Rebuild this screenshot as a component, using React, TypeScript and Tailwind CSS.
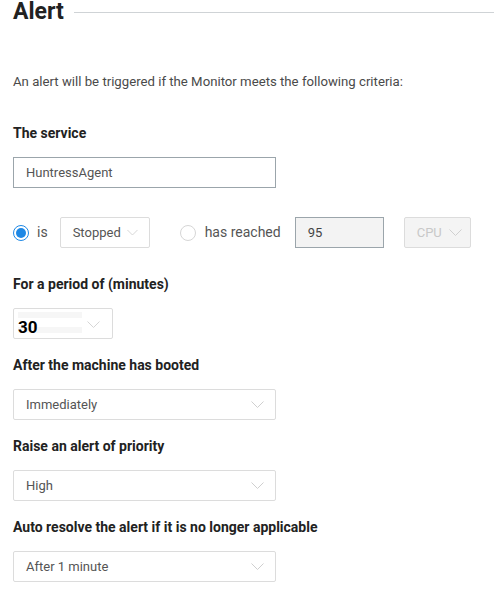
import React from 'react';

const font = { fontFamily: 'Roboto, "Liberation Sans", sans-serif' };

function Chevron({ color = '#cfcfcf' }: { color?: string }) {
  return (
    <svg width="13" height="7" viewBox="0 0 13 7" fill="none">
      <path d="M0.5 0.5 L6.5 6.5 L12.5 0.5" stroke={color} strokeWidth="1" />
    </svg>
  );
}

function Select({ value, className = '' }: { value: string; className?: string }) {
  return (
    <div
      className={`flex h-[31px] items-center justify-between rounded-[2px] border border-[#dcdcdc] bg-white pl-[12px] pr-[11px] text-[13px] text-[#555] ${className}`}
    >
      <span>{value}</span>
      <Chevron />
    </div>
  );
}

function Label({ children }: { children: React.ReactNode }) {
  return <div className="mb-[15px] h-[18px] text-[14px] font-bold leading-[18px] text-[#222]">{children}</div>;
}

export default function App() {
  return (
    <div className="h-[591px] w-[494px] overflow-hidden bg-white pl-[13px]" style={font}>
      <div className="flex h-[24px] items-center">
        <h1 className="text-[23px] font-bold leading-[24px] text-[#222]">Alert</h1>
        <div className="ml-[10px] h-px flex-1 bg-[#cfd3d6]" />
      </div>

      <p className="mt-[49px] h-[18px] text-[13.2px] leading-[18px] text-[#4a4a4a]">
        An alert will be triggered if the Monitor meets the following criteria:
      </p>

      <div className="mt-[33px]">
        <Label>The service</Label>
        <div className="flex h-[31px] w-[263px] items-center border border-[#9ba5ab] px-[12px] text-[13px] text-[#555]">
          HuntressAgent
        </div>
      </div>

      <div className="mt-[29px] flex h-[31px] items-center text-[14px]">
        <span className="flex h-[16px] w-[16px] items-center justify-center rounded-full border border-[#1e88e5]">
          <span className="h-[10px] w-[10px] rounded-full bg-[#1e88e5]" />
        </span>
        <span className="ml-[8px] text-[#555]">is</span>
        <Select value="Stopped" className="ml-[12px] h-[31px] w-[90px] gap-[6px] pl-[11px]" />
        <span className="ml-[30px] h-[16px] w-[16px] rounded-full border border-[#d6d6d6]" />
        <span className="ml-[9px] text-[#555]">has reached</span>
        <div className="ml-[14px] flex h-[31px] w-[89px] items-center border border-[#9ba5ab] bg-[#f3f3f3] px-[12px] text-[13px] text-[#444]">
          95
        </div>
        <div className="ml-[20px] flex h-[31px] w-[67px] items-center justify-between rounded-[2px] border border-[#dcdcdc] bg-[#f4f4f4] pl-[12px] pr-[8px] text-[13px] text-[#c8c8c8]">
          <span>CPU</span>
          <Chevron color="#d0d0d0" />
        </div>
      </div>

      <div className="mt-[27px]">
        <Label>For a period of (minutes)</Label>
        <div className="relative h-[31px] w-[100px] rounded-[2px] border border-[#dcdcdc] bg-white">
          <div className="absolute left-[4px] top-[3px] h-[6px] w-[64px] bg-[#f6f6f6]" />
          <div className="absolute left-[4px] top-[18px] h-[6px] w-[64px] bg-[#f6f6f6]" />
          <span className="absolute bottom-[1px] left-[4px] text-[17px] font-bold leading-[20px] text-black [text-shadow:0_0_2px_#fff,0_0_3px_#fff]">
            30
          </span>
          <span className="absolute right-[12px] top-[12px]">
            <Chevron color="#d6d6d6" />
          </span>
        </div>
      </div>

      <div className="mt-[17px]">
        <Label>After the machine has booted</Label>
        <Select value="Immediately" className="w-[263px]" />
      </div>

      <div className="mt-[17px]">
        <Label>Raise an alert of priority</Label>
        <Select value="High" className="w-[263px]" />
      </div>

      <div className="mt-[17px]">
        <Label>Auto resolve the alert if it is no longer applicable</Label>
        <Select value="After 1 minute" className="w-[263px]" />
      </div>
    </div>
  );
}
